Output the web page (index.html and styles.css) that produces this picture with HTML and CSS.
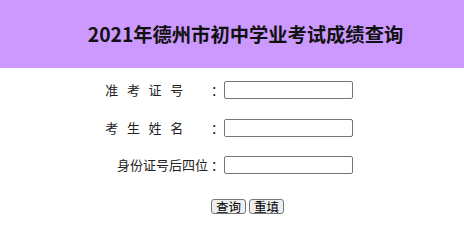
FILE: index.html
```html
<!DOCTYPE html>
<html lang="zh-CN">
<head>
    <meta charset="UTF-8">
    <title>2021年德州市初中学业考试成绩查询</title>
    <link rel="stylesheet" href="styles.css">
</head>
<body>
    <header class="top">
        <h1>2021年德州市初中学业考试成绩查询</h1>
    </header>
    <form class="query" onsubmit="return false;">
        <div class="fields">
            <label class="label" for="zkzh"><span class="spread">准考证号</span><span class="colon">：</span></label>
            <input class="box" type="text" id="zkzh">
            <label class="label" for="xm"><span class="spread">考生姓名</span><span class="colon">：</span></label>
            <input class="box" type="text" id="xm">
            <label class="label" for="sfz"><span>身份证号后四位</span><span class="colon">：</span></label>
            <input class="box" type="text" id="sfz">
        </div>
        <div class="actions">
            <button type="submit" class="btn">查询</button>
            <button type="reset" class="btn">重填</button>
        </div>
    </form>
</body>
</html>
```

FILE: styles.css
```css
body {
    margin: 0;
    padding: 0;
    background-color: #fff;
    font-family: "Noto Sans CJK SC", "Microsoft YaHei", sans-serif;
    color: #000;
}
.top {
    background-color: #cc99ff;
    height: 68px;
    display: flex;
    align-items: center;
    justify-content: center;
    padding-left: 27px;
}
.top h1 {
    margin: 0;
    font-size: 19.3px;
    font-weight: bold;
    color: #111;
}
.query {
    margin: 13px 0 0 100px;
    width: 295px;
}
.fields {
    display: grid;
    grid-template-columns: 124px 129px;
    row-gap: 19.5px;
    align-items: center;
}
.label {
    font-size: 13px;
    line-height: 18px;
    height: 18px;
    white-space: nowrap;
    display: flex;
    justify-content: flex-end;
    color: #222;
}
.spread {
    letter-spacing: 8.7px;
    margin-right: 16px;
}
.colon {
    width: 16px;
    padding-left: 3px;
    box-sizing: border-box;
}
.box {
    height: 18px;
    box-sizing: border-box;
    border: 1px solid #767676;
    border-radius: 2px;
    padding: 0 2px;
    margin: 0;
    font-size: 12px;
}
.actions {
    margin-top: 25px;
    display: flex;
    justify-content: center;
    gap: 3px;
}
.btn {
    height: 15px;
    padding: 0 4px;
    margin: 0;
    font-family: "Noto Sans CJK SC", sans-serif;
    font-size: 12.5px;
    line-height: 13px;
    background-color: #efefef;
    border: 1px solid #767676;
    border-radius: 3px;
    color: #000;
}
```
